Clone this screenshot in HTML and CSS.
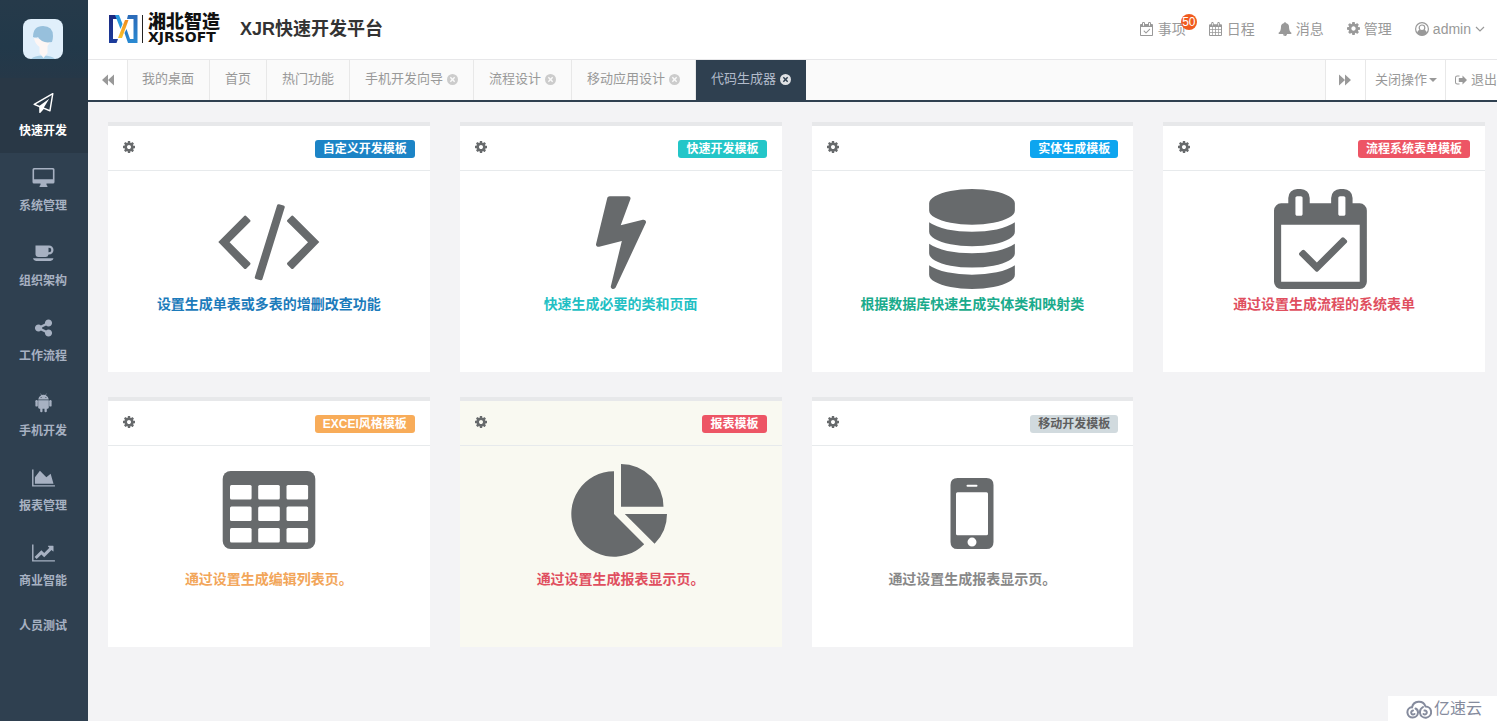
FILE: index.html
```html
<!DOCTYPE html>
<html lang="zh-CN">
<head>
<meta charset="utf-8">
<title>XJR快速开发平台</title>
<link rel="stylesheet" href="styles.css">
</head>
<body>
<svg class="sprite" aria-hidden="true">
  <symbol id="plane" viewBox="0 0 1792 1792"><path d="M1764 11q33 24 27 64l-256 1536q-5 29-32 45-14 8-31 8-11 0-24-5l-527-215-298 327q-18 21-47 21-14 0-23-4-19-7-30-23.500t-11-36.500v-452l-472-193q-37-14-40-55-3-39 32-59l1664-960q35-21 68 2zm-342 1499l221-1323-1434 827 336 137 863-639-478 797z"/></symbol>
  <symbol id="desktop" viewBox="0 0 22 20"><path fill-rule="evenodd" d="M1.500 0h19q1.500 0 1.500 1.500v12.500q0 1.500-1.500 1.500H14v1.500q1 .5 1 1.500 0 .5-.5.5h-7Q7 19 7 18.500q0-1 1-1.500v-1.500H1.500Q0 15.500 0 14V1.500Q0 0 1.500 0zM2 1.500q-.4 0-.4.400v9.300h18.800V1.900q0-.4-.4-.4z"/></symbol>
  <symbol id="coffee" viewBox="0 0 22 20"><path fill-rule="evenodd" d="M3 2.500H16.500a4.500 4.500 0 0 1 0 9H16Q15.500 14 13 14H6Q3 14 3 11zM16 4.700v4.600h.5a2.300 2.300 0 0 0 0-4.600zM.5 15.300h20.500q-.5 2.700-3 2.700H3.500q-2.500 0-3-2.700z"/></symbol>
  <symbol id="share" viewBox="0 0 1792 1792"><path d="M1344 1024q133 0 226.500 93.500t93.500 226.500-93.500 226.500-226.500 93.500-226.500-93.500-93.500-226.500q0-12 2-34l-360-180q-92 86-218 86-133 0-226.500-93.500t-93.500-226.500 93.500-226.500 226.500-93.500q126 0 218 86l360-180q-2-22-2-34 0-133 93.500-226.500t226.500-93.500 226.500 93.500 93.500 226.500-93.500 226.500-226.500 93.500q-126 0-218-86l-360 180q2 22 2 34t-2 34l360 180q92-86 218-86z"/></symbol>
  <symbol id="android" viewBox="0 0 20 20"><path fill-rule="evenodd" d="M4.700 6.600Q5 3.500 7.700 2.200L6.800.6l.4-.2.900 1.600q1.900-.7 3.800 0L12.800.4l.4.200-.9 1.600q2.700 1.300 3 4.400zM7.600 3.900a.5.500 0 1 0 0 1 .5.500 0 1 0 0-1zm4.800 0a.5.500 0 1 0 0 1 .5.500 0 1 0 0-1z"/><path d="M4.700 7.200h10.600v7.400q0 1.100-1.100 1.100h-.9v2.500a1.100 1.100 0 0 1-2.300 0v-2.500H9v2.500a1.100 1.100 0 0 1-2.300 0v-2.500h-.9q-1.100 0-1.100-1.100z"/><rect x="1.900" y="7" width="2.400" height="6.600" rx="1.200"/><rect x="15.700" y="7" width="2.400" height="6.600" rx="1.200"/></symbol>
  <symbol id="area" viewBox="0 0 2048 1792"><path d="M2048 1536v128h-2048v-1536h128v1408h1920zm-384-1024l256 896h-1664v-576l448-576 576 576z"/></symbol>
  <symbol id="line" viewBox="0 0 2048 1792"><path d="M2048 1536v128h-2048v-1536h128v1408h1920zm-128-1248v435q0 21-19.500 29.500t-35.500-7.500l-121-121-633 633q-10 10-23 10t-23-10l-233-233-416 416-192-192 585-585q10-10 23-10t23 10l233 233 464-464-121-121q-16-16-7.500-35.500t29.500-19.500h435q14 0 23 9t9 23z"/></symbol>
  <symbol id="cog" viewBox="128 128 1536 1536"><path d="M1152 896q0-106-75-181t-181-75-181 75-75 181 75 181 181 75 181-75 75-181zm512-109v222q0 12-8 23t-20 13l-185 28q-19 54-39 91 35 50 107 138 10 12 10 25t-9 23q-27 37-99 108t-94 71q-12 0-26-9l-138-108q-44 23-91 38-16 136-29 186-7 28-36 28h-222q-14 0-24.500-8.500t-11.500-21.500l-28-184q-49-16-90-37l-141 107q-10 9-25 9-14 0-25-11-126-114-165-168-7-10-7-23 0-12 8-23 15-21 51-66.500t54-70.500q-27-50-41-99l-183-27q-13-2-21-12.500t-8-23.500v-222q0-12 8-23t19-13l186-28q14-46 39-92-40-57-107-138-10-12-10-24 0-10 9-23 26-36 98.500-107.500t94.500-71.500q13 0 26 10l138 107q44-23 91-38 16-136 29-186 7-28 36-28h222q14 0 24.500 8.500t11.500 21.500l28 184q49 16 90 37l142-107q9-9 24-9 13 0 25 10 129 119 165 170 7 8 7 22 0 12-8 23-15 21-51 66.500t-54 70.500q26 50 41 98l183 28q13 2 21 12.500t8 23.500z"/></symbol>
  <symbol id="calcheck" viewBox="0 0 1792 1792"><path d="M1303 964l-512 512q-10 9-23 9t-23-9l-288-288q-9-10-9-23t9-22l46-46q9-9 22-9t23 9l220 220 444-444q10-9 23-9t22 9l46 46q9 9 9 22t-9 23zm-1175 700h1408v-1024h-1408v1024zm384-1216v-288q0-14-9-23t-23-9h-64q-14 0-23 9t-9 23v288q0 14 9 23t23 9h64q14 0 23-9t9-23zm768 0v-288q0-14-9-23t-23-9h-64q-14 0-23 9t-9 23v288q0 14 9 23t23 9h64q14 0 23-9t9-23zm384-64v1280q0 52-38 90t-90 38h-1408q-52 0-90-38t-38-90v-1280q0-52 38-90t90-38h128v-96q0-66 47-113t113-47h64q66 0 113 47t47 113v96h384v-96q0-66 47-113t113-47h64q66 0 113 47t47 113v96h128q52 0 90 38t38 90z"/></symbol>
  <symbol id="calendar" viewBox="0 0 14 14"><path fill-rule="evenodd" d="M1 2.300h1.200V1.200a1.200 1.200 0 0 1 2.500 0v1.100h3.600V1.200a1.200 1.200 0 0 1 2.500 0v1.100H12q1 0 1 1V13q0 1-1 1H1q-1 0-1-1V3.300q0-1 1-1zM3.100 1v2.500h.7V1zm6.100 0v2.500h.7V1zM1 5v2.200h2.200V5zm2.900 0v2.200h2.200V5zm3 0v2.200h2.200V5zm2.900 0v2.200H12V5zM1 7.900v2.200h2.200V7.900zm2.900 0v2.200h2.200V7.900zm3 0v2.200h2.200V7.900zm2.900 0v2.200H12V7.900zM1 10.800V13h2.200v-2.200zm2.900 0V13h2.200v-2.200zm3 0V13h2.200v-2.200zm2.900 0V13H12v-2.200z"/></symbol>
  <symbol id="bell" viewBox="0 0 1792 1792"><path d="M912 1696q0-16-16-16-59 0-101.500-42.500t-42.500-101.500q0-16-16-16t-16 16q0 73 51.500 124.500t124.500 51.500q16 0 16-16zm816-288q0 52-38 90t-90 38h-448q0 106-75 181t-181 75-181-75-75-181h-448q-52 0-90-38t-38-90q50-42 91-88t85-119.500 74.500-158.500 50-206 19.500-260q0-152 117-282.500t307-158.500q-8-19-8-39 0-40 28-68t68-28 68 28 28 68q0 20-8 39 190 28 307 158.500t117 282.500q0 139 19.500 260t50 206 74.500 158.500 85 119.500 91 88z"/></symbol>
  <symbol id="user" viewBox="0 0 14 14"><circle cx="7" cy="7" r="6.400" fill="none" stroke="currentColor" stroke-width="1.200"/><circle cx="7" cy="5.800" r="2.800" fill="none" stroke="currentColor" stroke-width="1.200"/><path d="M2 11q.6-2.600 2.700-3.200Q7 9.800 9.300 7.800q2.100.6 2.700 3.200-2 2.500-5 2.500T2 11z"/></symbol>
  <symbol id="chevron" viewBox="0 0 10 10"><path d="M1 3l4 4 4-4" fill="none" stroke="currentColor" stroke-width="1.200"/></symbol>
  <symbol id="back" viewBox="0 0 12 12"><path d="M6 .5v11L0 6zM12 .5v11L6 6z"/></symbol>
  <symbol id="forward" viewBox="0 0 12 12"><path d="M0 .5v11L6 6zM6 .5v11L12 6z"/></symbol>
  <symbol id="close" viewBox="0 0 12 12"><path fill-rule="evenodd" d="M6 0a6 6 0 1 1 0 12A6 6 0 0 1 6 0zM4.200 3.100L3.100 4.200 4.900 6 3.100 7.800l1.100 1.100L6 7.100l1.800 1.800 1.100-1.100L7.100 6l1.800-1.800-1.100-1.100L6 4.900z"/></symbol>
  <symbol id="exit" viewBox="0 0 12 12"><path d="M4.500 1.500v1H2.200Q1 2.500 1 3.700v4.600q0 1.200 1.200 1.200h2.300v1H2.200Q0 10.500 0 8.300V3.700Q0 1.500 2.200 1.500zM7.500 1.500L12 6l-4.500 4.500V8H3.800V4h3.700z"/></symbol>
  <symbol id="code" viewBox="0 0 110 100"><path d="M4.300 53L30 27.200q1.200-1.200 2.400 0l3.500 3.500q1.200 1.200 0 2.400L15.600 53.300l20.300 20.300q1.200 1.200 0 2.400l-3.500 3.500q-1.200 1.200-2.400 0zM105.300 53L79.500 27.200q-1.200-1.200-2.400 0l-3.500 3.500q-1.200 1.200 0 2.400L94 53.300 73.600 73.600q-1.200 1.200 0 2.400l3.500 3.500q1.200 1.200 2.400 0zM63 16.500q.5-1.700 2.100-1.200l4.400 1.200q1.600.5 1.200 2.100L48.500 90q-.5 1.600-2.100 1.200L42 90q-1.600-.5-1.200-2.100z"/></symbol>
  <symbol id="bolt" viewBox="0 0 1792 1792"><path d="M1333 566q18 20 7 44l-540 1157q-13 25-42 25-4 0-14-2-17-5-25.500-19t-4.500-30l197-808-406 101q-4 1-12 1-18 0-31-11-18-15-13-39l201-825q4-14 16-23t28-9h328q19 0 32 12.500t13 29.500q0 8-5 18l-171 463 396-98q8-2 12-2 19 0 34 15z"/></symbol>
  <symbol id="database" viewBox="0 0 1792 1792"><path d="M896 768q237 0 443-43t325-127v170q0 69-103 128t-280 93.500-385 34.500-385-34.500-280-93.500-103-128v-170q119 84 325 127t443 43zm0 768q237 0 443-43t325-127v170q0 69-103 128t-280 93.500-385 34.500-385-34.500-280-93.500-103-128v-170q119 84 325 127t443 43zm0-384q237 0 443-43t325-127v170q0 69-103 128t-280 93.500-385 34.500-385-34.500-280-93.500-103-128v-170q119 84 325 127t443 43zm0-1152q208 0 385 34.500t280 93.500 103 128v128q0 69-103 128t-280 93.500-385 34.500-385-34.500-280-93.500-103-128v-128q0-69 103-128t280-93.500 385-34.500z"/></symbol>
  <symbol id="table" viewBox="0 0 100 100"><mask id="cells"><rect width="100" height="100" fill="#fff"/><g fill="#000"><rect x="11" y="21" width="21.600" height="14.600" rx="1.500"/><rect x="39.200" y="21" width="21.600" height="14.600" rx="1.500"/><rect x="67.500" y="21" width="21.600" height="14.600" rx="1.500"/><rect x="11" y="42.500" width="21.600" height="14.600" rx="1.500"/><rect x="39.200" y="42.500" width="21.600" height="14.600" rx="1.500"/><rect x="67.500" y="42.500" width="21.600" height="14.600" rx="1.500"/><rect x="11" y="64" width="21.600" height="14.600" rx="1.500"/><rect x="39.200" y="64" width="21.600" height="14.600" rx="1.500"/><rect x="67.500" y="64" width="21.600" height="14.600" rx="1.500"/></g></mask><rect x="3.700" y="7" width="92.600" height="78" rx="8" mask="url(#cells)"/></symbol>
  <symbol id="pie" viewBox="0 0 100 100"><path d="M43 50V7.300A42.700 42.700 0 1 0 73.200 80.200zM50 42.800V0a42.500 42.800 0 0 1 42.500 42.800zM53.800 50H96a42 42 0 0 1-12.400 29.800z"/></symbol>
  <symbol id="phone" viewBox="0 0 100 100"><path fill-rule="evenodd" d="M35.600 14h28.800q7.100 0 7.100 7.100v56.800q0 7.100-7.100 7.100H35.600q-7.100 0-7.100-7.100V21.100q0-7.100 7.100-7.100zM35.500 28.300q-1.500 0-1.500 1.500v40q0 1.500 1.500 1.500h29q1.500 0 1.500-1.500v-40q0-1.500-1.500-1.500zM45.500 20.700a1 1 0 0 0 0 2h9a1 1 0 0 0 0-2zM50 73.600a4.500 4.500 0 1 0 0 9 4.500 4.500 0 1 0 0-9z"/></symbol>
</svg>
<div class="app">
  <aside class="sidebar">
    <div class="profile">
      <svg class="avatar" viewBox="0 0 40 40" role="img" aria-label="头像"><rect width="40" height="40" fill="#e0effb"/><path d="M8 40q3-3.500 12-3.500T32 40z" fill="#a9cfe6"/><path d="M11 19q1 6 5.500 9v6l4 5 4-5v-7L28 22z" fill="#fdf6f4"/><path d="M10 18Q10 7 20 7t10 10q0 3-1 6-10 2-14-5-2 1-5 0z" fill="#97c0dc"/></svg>
    </div>
    <nav class="menu">
      <a class="menu-item active" href="#"><svg class="menu-icon"><use href="#plane"/></svg>快速开发</a>
      <a class="menu-item" href="#"><svg class="menu-icon"><use href="#desktop"/></svg>系统管理</a>
      <a class="menu-item" href="#"><svg class="menu-icon"><use href="#coffee"/></svg>组织架构</a>
      <a class="menu-item" href="#"><svg class="menu-icon"><use href="#share"/></svg>工作流程</a>
      <a class="menu-item" href="#"><svg class="menu-icon"><use href="#android"/></svg>手机开发</a>
      <a class="menu-item" href="#"><svg class="menu-icon"><use href="#area"/></svg>报表管理</a>
      <a class="menu-item" href="#"><svg class="menu-icon"><use href="#line"/></svg>商业智能</a>
      <a class="menu-item" href="#">人员测试</a>
    </nav>
  </aside>
  <div class="main">
    <header class="topbar">
      <div class="logo">
        <svg class="logo-mark" viewBox="0 0 35 28" aria-hidden="true">
          <defs><linearGradient id="lb" x2="0" y2="1"><stop stop-color="#1c2a80"/><stop offset="1" stop-color="#1c3c9c"/></linearGradient><linearGradient id="rb" x2="0" y2="1"><stop stop-color="#2b6ab8"/><stop offset="1" stop-color="#2a8ad2"/></linearGradient><linearGradient id="or" x2="0" y2="1"><stop stop-color="#f08a1d"/><stop offset="1" stop-color="#fbc42c"/></linearGradient></defs>
          <path d="M1 0h9l1.500 4H5v20h5l-1.500 4H1z" fill="url(#lb)"/>
          <path d="M7 0h4l3.500 9-2 5z" fill="#2a9be0"/>
          <path d="M17 5h3.500L14 23h-4z" fill="url(#or)"/>
          <path d="M20 0h9.500v28H20l-3.500-10 2-4 3.500 10h3.500V4H19z" fill="url(#rb)"/>
          <path d="M34 0h1v28h-1z" fill="#222"/>
        </svg>
        <div class="logo-words"><span class="logo-cn">湘北智造</span><span class="logo-en">XJRSOFT</span></div>
      </div>
      <h1 class="title">XJR快速开发平台</h1>
      <nav class="tools">
        <a class="tool" href="#"><svg class="tool-icon"><use href="#calcheck"/></svg>事项<span class="badge">50</span></a>
        <a class="tool" href="#"><svg class="tool-icon"><use href="#calendar"/></svg>日程</a>
        <a class="tool" href="#"><svg class="tool-icon"><use href="#bell"/></svg>消息</a>
        <a class="tool" href="#"><svg class="tool-icon cog"><use href="#cog"/></svg>管理</a>
        <a class="tool" href="#"><svg class="tool-icon"><use href="#user"/></svg>admin<svg class="tool-chevron"><use href="#chevron"/></svg></a>
      </nav>
    </header>
    <div class="tabbar">
      <button class="scroll" type="button" aria-label="向左"><svg class="tab-icon"><use href="#back"/></svg></button>
      <nav class="tabs">
        <a class="tab" href="#">我的桌面</a>
        <a class="tab" href="#">首页</a>
        <a class="tab" href="#">热门功能</a>
        <a class="tab" href="#">手机开发向导<svg class="close"><use href="#close"/></svg></a>
        <a class="tab" href="#">流程设计<svg class="close"><use href="#close"/></svg></a>
        <a class="tab" href="#">移动应用设计<svg class="close"><use href="#close"/></svg></a>
        <a class="tab current" href="#">代码生成器<svg class="close"><use href="#close"/></svg></a>
      </nav>
      <button class="scroll right" type="button" aria-label="向右"><svg class="tab-icon"><use href="#forward"/></svg></button>
      <button class="action" type="button">关闭操作<span class="caret"></span></button>
      <a class="action exit" href="#"><svg class="tab-icon"><use href="#exit"/></svg>退出</a>
    </div>
    <main class="cards">
      <section class="card">
        <div class="card-head"><button class="gear" type="button" aria-label="设置"><svg><use href="#cog"/></svg></button><span class="label blue">自定义开发模板</span></div>
        <div class="card-body"><svg class="pic"><use href="#code"/></svg><h2 class="caption text-blue">设置生成单表或多表的增删改查功能</h2></div>
      </section>
      <section class="card">
        <div class="card-head"><button class="gear" type="button" aria-label="设置"><svg><use href="#cog"/></svg></button><span class="label teal">快速开发模板</span></div>
        <div class="card-body"><svg class="pic"><use href="#bolt"/></svg><h2 class="caption text-teal">快速生成必要的类和页面</h2></div>
      </section>
      <section class="card">
        <div class="card-head"><button class="gear" type="button" aria-label="设置"><svg><use href="#cog"/></svg></button><span class="label sky">实体生成模板</span></div>
        <div class="card-body"><svg class="pic"><use href="#database"/></svg><h2 class="caption text-green">根据数据库快速生成实体类和映射类</h2></div>
      </section>
      <section class="card">
        <div class="card-head"><button class="gear" type="button" aria-label="设置"><svg><use href="#cog"/></svg></button><span class="label red">流程系统表单模板</span></div>
        <div class="card-body"><svg class="pic"><use href="#calcheck"/></svg><h2 class="caption text-red">通过设置生成流程的系统表单</h2></div>
      </section>
      <section class="card">
        <div class="card-head"><button class="gear" type="button" aria-label="设置"><svg><use href="#cog"/></svg></button><span class="label orange">EXCEl风格模板</span></div>
        <div class="card-body"><svg class="pic"><use href="#table"/></svg><h2 class="caption text-orange">通过设置生成编辑列表页。</h2></div>
      </section>
      <section class="card hovered">
        <div class="card-head"><button class="gear" type="button" aria-label="设置"><svg><use href="#cog"/></svg></button><span class="label red">报表模板</span></div>
        <div class="card-body"><svg class="pic"><use href="#pie"/></svg><h2 class="caption text-red">通过设置生成报表显示页。</h2></div>
      </section>
      <section class="card">
        <div class="card-head"><button class="gear" type="button" aria-label="设置"><svg><use href="#cog"/></svg></button><span class="label gray">移动开发模板</span></div>
        <div class="card-body"><svg class="pic"><use href="#phone"/></svg><h2 class="caption text-gray">通过设置生成报表显示页。</h2></div>
      </section>
    </main>
  </div>
</div>
<div class="watermark">
  <svg class="cloud" viewBox="0 0 26 20" aria-hidden="true"><g fill="none" stroke="#858b9d" stroke-width="2" stroke-linecap="round"><path d="M6 8.500A7 7 0 0 1 19.500 7.500M6 8A5.300 5.300 0 1 0 12 13.500q0-3-2.500-4M19.500 7.500a5.600 5.600 0 1 1-5.500 6.500q-.5-4 3-6"/><path d="M7 11.500a2 2 0 1 0 1.500 3.500M18.500 11.500a2 2 0 1 1-1 3.500"/></g></svg>
  亿速云
</div>
</body>
</html>
```
FILE: styles.css
```css
* { box-sizing: border-box; }

body {
  margin: 0;
  background: #f3f3f5;
  color: #676a6c;
  font-family: "Liberation Sans", "Noto Sans CJK SC", sans-serif;
  font-size: 13px;
}

a { color: inherit; text-decoration: none; }

button {
  margin: 0;
  padding: 0;
  border: 0;
  background: none;
  color: inherit;
  font: inherit;
}

svg { display: block; fill: currentColor; }

.sprite { position: absolute; width: 0; height: 0; }

.app { display: flex; min-height: 100vh; }

/* Sidebar */
.sidebar { flex: none; width: 88px; background: #2f4050; }

.profile {
  height: 78px;
  padding: 19px 23px;
  background: linear-gradient(#263a4a, #22394a 60%, #263848);
}

.avatar { width: 40px; height: 40px; border-radius: 8px; }

.menu-item {
  display: flex;
  flex-direction: column;
  align-items: center;
  gap: 8px;
  padding: 14px 2px 13px 0;
  color: #a7b1c2;
  font-size: 12px;
  font-weight: bold;
  line-height: 18px;
}

.menu-item.active { background: #293846; color: #fff; }

.menu-icon { width: 23px; height: 22px; padding: 1px 0; }

/* Header */
.main { flex: 1; min-width: 0; }

.topbar {
  display: flex;
  align-items: center;
  height: 60px;
  padding: 0 12px 2px 20px;
  background: #fff;
  border-bottom: 1px solid #e7e7e9;
}

.logo { display: flex; align-items: center; gap: 5px; }

.logo-mark { width: 35px; height: 28px; }

.logo-words { display: flex; flex-direction: column; width: 76px; color: #111; white-space: nowrap; }

.logo-cn { font-size: 18px; font-weight: 900; line-height: 17px; }

.logo-en { font-family: "DejaVu Sans", sans-serif; font-size: 14px; font-weight: bold; line-height: 12px; }

.title { margin: 0 0 0 16px; color: #333; font-size: 18px; font-weight: bold; line-height: 24px; white-space: nowrap; }

.tools { display: flex; gap: 23px; margin-left: auto; color: #999; font-size: 14px; line-height: 20px; }

.tool { position: relative; display: flex; align-items: center; gap: 4px; white-space: nowrap; }

.tool-icon { width: 14px; height: 14px; }

.tool-icon.cog { width: 13px; height: 13px; }

.tool-chevron { width: 10px; height: 10px; }

.badge {
  position: absolute;
  top: -5px;
  right: -11px;
  width: 16px;
  height: 16px;
  border-radius: 8px;
  background: #f05a1e;
  color: #fff;
  font-size: 12px;
  line-height: 16px;
  text-align: center;
}

/* Tabs */
.tabbar {
  display: flex;
  height: 42px;
  border-bottom: 2px solid #2f4050;
  background: #fafafa;
  color: #999;
  line-height: 20px;
}

.tabs { display: flex; flex: 1; min-width: 0; }

.tab {
  display: flex;
  align-items: center;
  gap: 4px;
  padding: 0 15px 2px 14px;
  border-right: 1px solid #e8e8e8;
  white-space: nowrap;
}

.tab + .tab { padding-left: 15px; }

.tab.current { border-right: 0; background: #2f4050; color: #b3bccb; }

.close { width: 11px; height: 11px; color: #ccc; }

.current .close { color: #dfe1e4; }

.scroll {
  display: flex;
  flex: none;
  align-items: center;
  justify-content: center;
  width: 40px;
  border-right: 1px solid #e8e8e8;
  background: #fff;
}

.scroll.right { width: 41px; border-left: 1px solid #e8e8e8; }

.tab-icon { width: 12px; height: 12px; }

.action {
  display: flex;
  flex: none;
  align-items: center;
  gap: 2px;
  padding: 0 8px 0 9px;
  border-right: 1px solid #e8e8e8;
  background: #fff;
  white-space: nowrap;
}

.action.exit { gap: 4px; padding: 0 0 0 9px; border-right: 0; }

.caret { border: 4px solid transparent; border-top-color: currentColor; border-bottom: 0; }

/* Cards */
.cards {
  display: grid;
  grid-template-columns: repeat(4, minmax(0, 1fr));
  gap: 25px 30px;
  padding: 20px 12px 20px 20px;
}

.card { border-top: 4px solid #e7e8ea; background: #fff; }

.card.hovered { background: #f9f9f1; }

.card-head {
  display: flex;
  align-items: flex-start;
  justify-content: space-between;
  padding: 14px 15px 12px;
  border-bottom: 1px solid #e7eaec;
}

.gear { display: flex; align-items: center; height: 14px; }

.gear svg { width: 12px; height: 12px; }

.label {
  padding: 0 8px;
  border-radius: 3px;
  color: #fff;
  font-size: 12px;
  font-weight: bold;
  line-height: 18px;
}

.blue { background: #1c84c6; }
.teal { background: #23c6c8; }
.sky { background: #0ea5ef; }
.red { background: #ed5565; }
.orange { background: #f8ac59; }
.gray { background: #d1dade; color: #5e5e5e; }

.card-body {
  display: flex;
  flex-direction: column;
  align-items: center;
  gap: 5px;
  padding: 18px 15px 58px;
}

.pic { width: 110px; height: 100px; }

.caption { margin: 0; font-size: 14px; font-weight: bold; line-height: 20px; }

.text-blue { color: #1c7bbb; }
.text-teal { color: #23bfc4; }
.text-green { color: #1aab8c; }
.text-red { color: #e04f5f; }
.text-orange { color: #f2a65a; }
.text-gray { color: #888; }

/* Site mark over the page corner */
.watermark {
  position: fixed;
  right: 0;
  bottom: 0;
  display: flex;
  align-items: center;
  gap: 2px;
  padding: 0 15px 0 18px;
  background: #fff;
  color: #858b9d;
  font-size: 16px;
  line-height: 25px;
}

.cloud { width: 26px; height: 20px; }
```
